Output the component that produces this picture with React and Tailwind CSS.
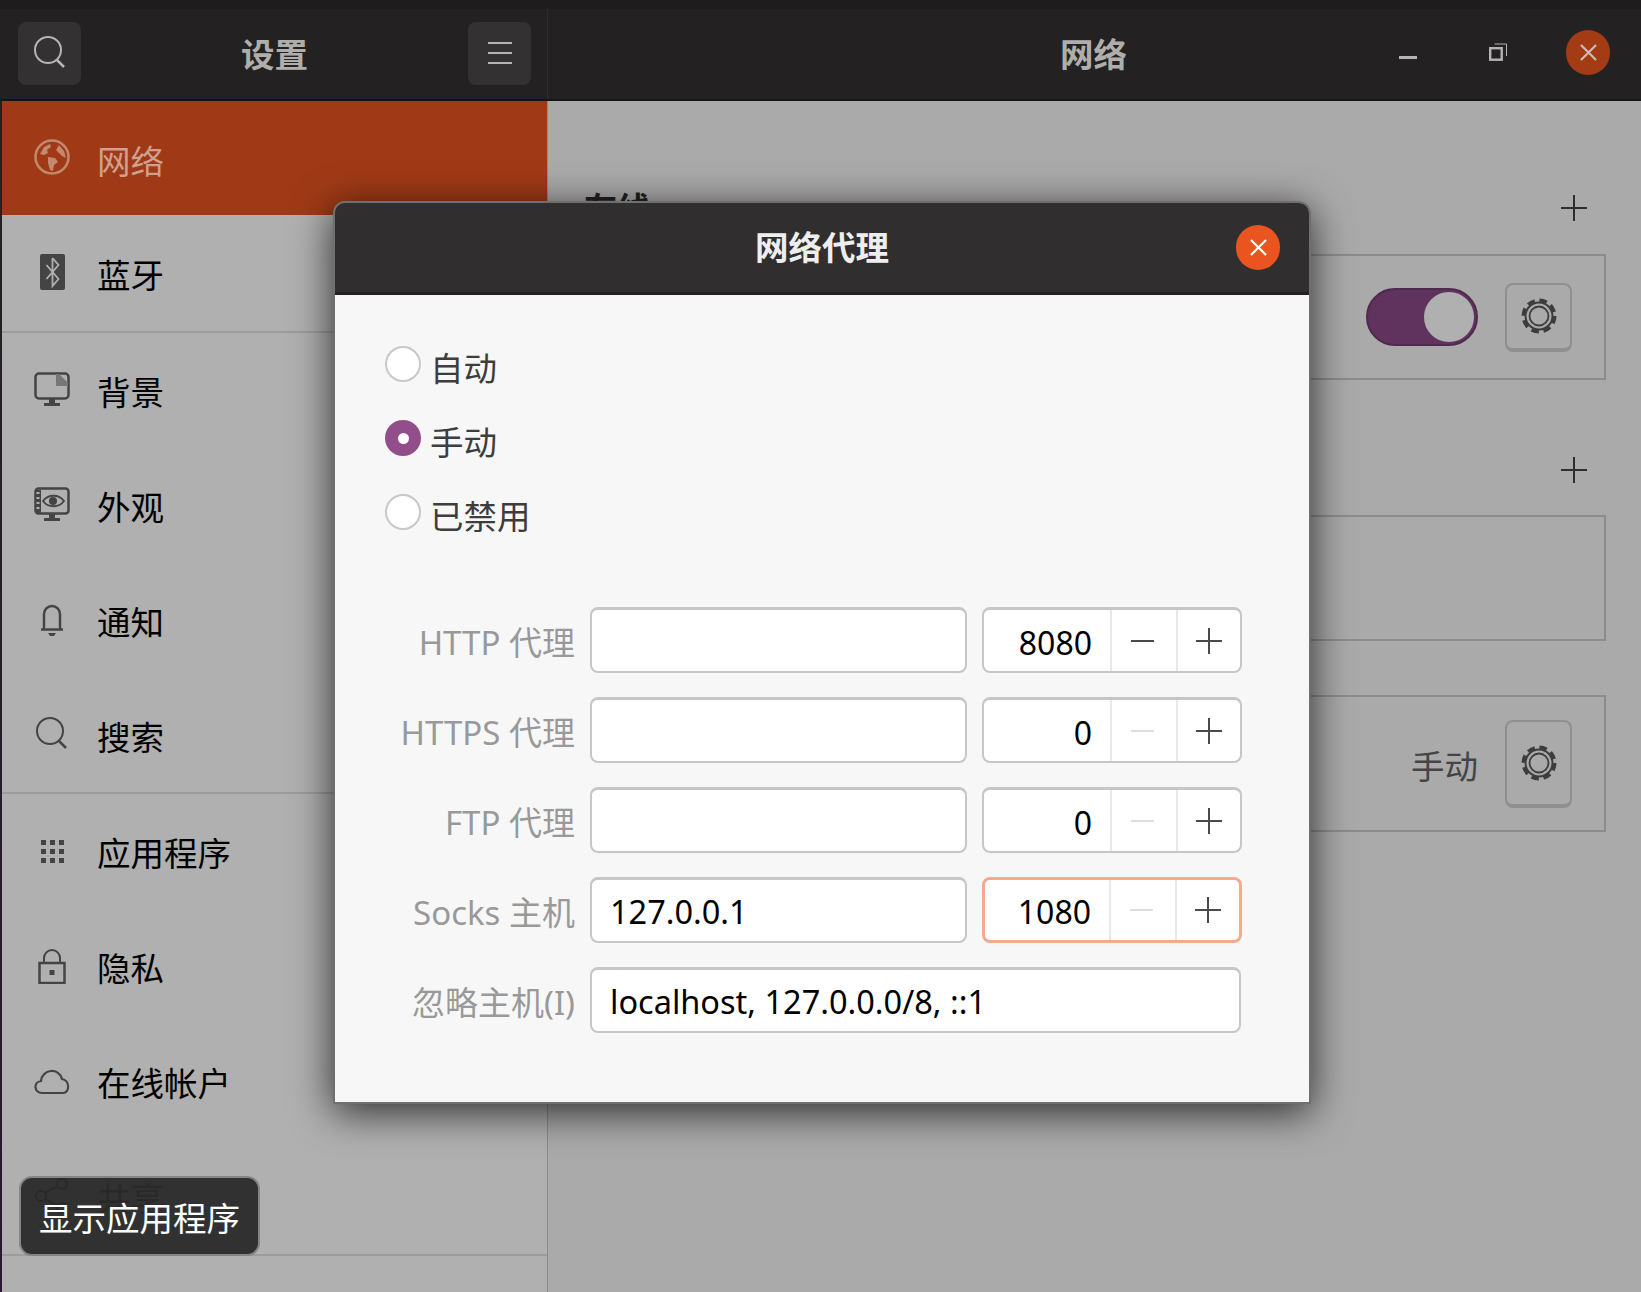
import React from 'react'

const ink = '#444444'

function SearchGlyph({ color = ink }) {
  return (
    <svg viewBox="0 0 36 36" className="w-[36px] h-[36px]" fill="none" stroke={color} strokeWidth="2">
      <circle cx="16" cy="15" r="13" />
      <path d="M25 25l7 7" strokeWidth="2.5" />
    </svg>
  )
}

function GlobeIcon() {
  return (
    <svg viewBox="0 0 36 36" className="w-[36px] h-[36px]" fill="none">
      <circle cx="18" cy="18" r="16.5" stroke="#c4886f" strokeWidth="2.5" />
      <path d="M6 15l4-7 6-3 1 3-4 3 1 3-4 2zM14 18l7 1 3 4-4 3-1 6-3-1-2-7zM25 6l5 6 2 7-4-2-3-3-3-3z" fill="#c4886f" />
    </svg>
  )
}

function BluetoothIcon() {
  return (
    <svg viewBox="0 0 36 36" className="w-[36px] h-[36px]" fill="none">
      <rect x="6" y="0" width="25" height="36" rx="2" fill={ink} />
      <path d="M18.5 4v28l6-7-12-14M18.5 4l6 7-12 14" stroke="#b0b0b0" strokeWidth="1.8" />
    </svg>
  )
}

function MonitorIcon() {
  return (
    <svg viewBox="0 0 36 36" className="w-[36px] h-[36px]" fill="none">
      <rect x="1.500" y="1.500" width="33" height="25" rx="3.500" stroke={ink} strokeWidth="2.500" />
      <path d="M22 2h3l9 9v3H22z" fill="#777777" />
      <path d="M15 27h6v4h5v3H10v-3h5z" fill={ink} />
    </svg>
  )
}

function AppearanceIcon() {
  return (
    <svg viewBox="0 0 36 36" className="w-[36px] h-[36px]" fill="none">
      <rect x="1.500" y="1.500" width="33" height="25" rx="3" stroke={ink} strokeWidth="2.500" />
      <path d="M1 3h6v23H1z" fill={ink} />
      <path d="M2.500 6h3M2.500 11h3M2.500 16h3M2.500 21h3" stroke="#b0b0b0" strokeWidth="2" />
      <path d="M9 14c5-7 16-7 21 0-5 7-16 7-21 0z" stroke={ink} strokeWidth="1.800" />
      <circle cx="19" cy="14" r="4" fill={ink} />
      <path d="M15 27h6v4h5v3H10v-3h5z" fill={ink} />
    </svg>
  )
}

function BellIcon() {
  return (
    <svg viewBox="0 0 36 36" className="w-[36px] h-[36px]" fill="none">
      <path d="M10 27V12a8 8 0 0 1 16 0v15M7 27.500h22" stroke={ink} strokeWidth="2.500" />
      <path d="M14 31h8l-2 3h-4z" fill={ink} />
    </svg>
  )
}

function GridIcon() {
  const dots = [7, 16, 25]
  return (
    <svg viewBox="0 0 36 36" className="w-[36px] h-[36px]" fill={ink}>
      {dots.map((y) => dots.map((x) => <rect key={`${x}-${y}`} x={x} y={y} width="5" height="5" />))}
    </svg>
  )
}

function LockIcon() {
  return (
    <svg viewBox="0 0 36 36" className="w-[36px] h-[36px]" fill="none">
      <path d="M10 15V10a8 8 0 0 1 16 0v5" stroke={ink} strokeWidth="2" />
      <rect x="5.500" y="15" width="25" height="20" stroke={ink} strokeWidth="2.500" />
      <rect x="15.500" y="22" width="5" height="5" fill={ink} />
    </svg>
  )
}

function CloudIcon() {
  return (
    <svg viewBox="0 0 36 36" className="w-[36px] h-[36px]" fill="none">
      <path d="M8 30c-8 0-9-11-1-12 1-12 18-14 21-2 8 1 8 14 1 14z" stroke={ink} strokeWidth="2.200" />
    </svg>
  )
}

function ShareIcon() {
  return (
    <svg viewBox="0 0 36 36" className="w-[36px] h-[36px]" fill="none" stroke="#111111" strokeWidth="2">
      <circle cx="7" cy="18" r="5" />
      <circle cx="28" cy="6" r="5" />
      <circle cx="28" cy="30" r="5" />
      <path d="M11 15l13-7M11 21l13 7" />
    </svg>
  )
}

function GearIcon() {
  return (
    <svg viewBox="0 0 36 36" className="w-[36px] h-[36px]" fill="none" stroke="#3d3d3d">
      <circle cx="18" cy="18" r="15.500" strokeWidth="4" strokeDasharray="7.500 4.670" />
      <circle cx="18" cy="18" r="13.500" strokeWidth="2" />
      <circle cx="18" cy="18" r="9.500" strokeWidth="1.800" />
    </svg>
  )
}

function CloseCircle({ bg, color }) {
  return (
    <div className={`w-[44px] h-[45px] rounded-full flex items-center justify-center ${bg}`}>
      <svg viewBox="0 0 18 18" className="w-[17px] h-[17px]" fill="none" stroke={color} strokeWidth="2.200">
        <path d="M1 1l16 16M17 1L1 17" />
      </svg>
    </div>
  )
}

const navGroups = [
  [
    { label: '网络', icon: <GlobeIcon />, active: true, h: 'h-[114px]' },
    { label: '蓝牙', icon: <BluetoothIcon />, h: 'h-[116px]' },
  ],
  [
    { label: '背景', icon: <MonitorIcon />, h: 'h-[115px]' },
    { label: '外观', icon: <AppearanceIcon />, h: 'h-[115px]' },
    { label: '通知', icon: <BellIcon />, h: 'h-[115px]' },
    { label: '搜索', icon: <SearchGlyph />, h: 'h-[114px]' },
  ],
  [
    { label: '应用程序', icon: <GridIcon />, h: 'h-[115px]' },
    { label: '隐私', icon: <LockIcon />, h: 'h-[115px]' },
    { label: '在线帐户', icon: <CloudIcon />, h: 'h-[115px]' },
    { label: '共享', icon: <ShareIcon />, h: 'h-[115px]' },
  ],
]

function NavRow({ item }) {
  return (
    <div className={`${item.h} flex items-center pl-[32px] ${item.active ? 'bg-[#a03a16] text-[#cfa08e]' : 'text-black'}`}>
      <div className="w-[36px] h-[36px] -mt-[2px]">{item.icon}</div>
      <span className={`ml-[27px] text-[33.5px] leading-none ${item.active ? 'mt-[7px]' : 'mt-[5px]'}`}>{item.label}</span>
    </div>
  )
}

function Sidebar() {
  return (
    <div className="w-[546px] shrink-0 bg-[#b0b0b0] border-r border-[#8c8c8c]">
      {navGroups.map((group, i) => (
        <div key={i} className="border-b-2 border-[#9c9c9c]">
          {group.map((item) => <NavRow key={item.label} item={item} />)}
        </div>
      ))}
    </div>
  )
}

function SectionHead({ title, className }) {
  return (
    <div className={`h-[48px] flex items-center justify-between pr-[19px] text-[33px] leading-none text-[#222222] ${className}`}>
      <span className="font-bold">{title}</span>
      <svg viewBox="0 0 26 26" className="w-[26px] h-[26px]" fill="none" stroke="#2e2e2e" strokeWidth="2">
        <path d="M13 0v26M0 13h26" />
      </svg>
    </div>
  )
}

function GearButton({ className }) {
  return (
    <div className={`w-[67px] flex items-center justify-center rounded-[8px] border-2 border-[#8f8f8f] border-b-[4px] ${className}`}>
      <GearIcon />
    </div>
  )
}

function MainPanel() {
  return (
    <div className="flex-1 bg-[#aaaaaa] pl-[36px] pr-[35px] pt-[83px]">
      <SectionHead title="有线" className="mb-[22px]" />
      <div className="h-[126px] border-2 border-[#8c8c8c] flex items-center justify-end pr-[32px] gap-[27px]">
        <div className="w-[112px] h-[58px] rounded-full bg-[#60335e] border-2 border-[#4f2a4e] flex justify-end">
          <div className="w-[54px] h-full rounded-full bg-[#b0b0b0] border-2 border-[#60335e]" />
        </div>
        <GearButton className="h-[69px]" />
      </div>
      <SectionHead title="" className="mt-[66px] mb-[21px]" />
      <div className="h-[126px] border-2 border-[#8c8c8c]" />
      <div className="mt-[54px] h-[137px] border-2 border-[#8c8c8c] flex items-center justify-end pr-[32px] gap-[27px]">
        <span className="pt-[6px] text-[33.5px] leading-none text-[#444444]">手动</span>
        <GearButton className="h-[88px]" />
      </div>
    </div>
  )
}

function Radio({ label, checked }) {
  return (
    <div className="h-[36px] flex items-center">
      {checked ? (
        <div className="w-[36px] h-[36px] rounded-full bg-[#924d8b] flex items-center justify-center">
          <div className="w-[11px] h-[11px] rounded-full bg-white" />
        </div>
      ) : (
        <div className="w-[36px] h-[36px] rounded-full bg-white border-2 border-[#c8c8c8]" />
      )}
      <span className="ml-[9px] pt-[10px] text-[33.5px] leading-none text-[#3d3d3d]">{label}</span>
    </div>
  )
}

function Spin({ value, canDecrease, focused }) {
  return (
    <div className={`w-[260px] h-full shrink-0 rounded-[8px] bg-white flex ${focused ? 'border-[3px] border-[#f5aa90]' : 'border-2 border-t-[3px] border-[#c6c6c6]'}`}>
      <div className="flex-1 flex items-center justify-end pr-[18px] pt-[4px] text-[32px] leading-none text-black">{value}</div>
      <div className="w-[66px] flex items-center justify-center pr-[3px] border-l-2 border-[#e8e8e8]">
        <div className={`w-[23px] h-[2px] ${canDecrease ? 'bg-[#4a4a4a]' : 'bg-[#dddddd]'}`} />
      </div>
      <div className="w-[64px] flex items-center justify-center border-l-2 border-[#e8e8e8]">
        <svg viewBox="0 0 26 26" className="w-[26px] h-[26px]" fill="none" stroke="#4a4a4a" strokeWidth="2">
          <path d="M13 0v26M0 13h26" />
        </svg>
      </div>
    </div>
  )
}

function Field({ label, children }) {
  return (
    <div className="h-[66px] flex gap-[15px]">
      <div className="w-[205px] shrink-0 flex items-center justify-end pt-[4px] whitespace-nowrap text-[33px] leading-none text-[#999999]">{label}</div>
      {children}
    </div>
  )
}

function TextBox({ value, className }) {
  return (
    <div className={`h-full rounded-[8px] bg-white border-2 border-t-[3px] border-[#c6c6c6] flex items-center pl-[18px] pt-[4px] text-[32.5px] leading-none text-black whitespace-nowrap ${className}`}>
      {value}
    </div>
  )
}

function ProxyDialog() {
  return (
    <div className="absolute left-[333px] top-[201px] w-[978px] h-[903px] flex flex-col rounded-t-[12px] border-2 border-[#6f6f6f] shadow-[0_8px_40px_rgba(0,0,0,0.75)] overflow-hidden">
      <div className="h-[92px] shrink-0 bg-[#302e2f] border-b-[3px] border-[#232122] grid grid-cols-[1fr_auto_1fr] items-center">
        <div />
        <span className="text-[33.5px] leading-none font-bold text-[#eeeeee]">网络代理</span>
        <div className="flex justify-end pr-[29px]">
          <CloseCircle bg="bg-[#e9541f]" color="#ffffff" />
        </div>
      </div>
      <div className="flex-1 bg-[#f7f7f7] pt-[51px] pl-[35px] pr-[68px]">
        <div className="pl-[15px] flex flex-col gap-[38px]">
          <Radio label="自动" />
          <Radio label="手动" checked />
          <Radio label="已禁用" />
        </div>
        <div className="mt-[77px] flex flex-col gap-[24px]">
          <Field label="HTTP 代理">
            <TextBox value="" className="w-[377px] shrink-0" />
            <Spin value="8080" canDecrease />
          </Field>
          <Field label="HTTPS 代理">
            <TextBox value="" className="w-[377px] shrink-0" />
            <Spin value="0" />
          </Field>
          <Field label="FTP 代理">
            <TextBox value="" className="w-[377px] shrink-0" />
            <Spin value="0" />
          </Field>
          <Field label="Socks 主机">
            <TextBox value="127.0.0.1" className="w-[377px] shrink-0" />
            <Spin value="1080" focused />
          </Field>
          <Field label="忽略主机(I)">
            <TextBox value="localhost, 127.0.0.0/8, ::1" className="flex-1" />
          </Field>
        </div>
      </div>
    </div>
  )
}

export default function App() {
  return (
    <div className="relative w-[1641px] h-[1292px] overflow-hidden flex flex-col bg-[#aaaaaa] font-['Noto_Sans','Noto_Sans_CJK_SC',sans-serif]">
      <div className="h-[9px] shrink-0 bg-[#1d1d1d]" />
      <div className="h-[92px] shrink-0 bg-[#232122] border-b-2 border-[#151515] flex pl-[2px]">
        <div className="w-[546px] shrink-0 border-r border-[#2e2c2d] grid grid-cols-[1fr_auto_1fr] items-center px-[16px]">
          <div className="w-[63px] h-[63px] rounded-[8px] bg-[#333132] flex items-center justify-center -mt-[2px]">
            <SearchGlyph color="#b5b5b5" />
          </div>
          <span className="pt-[2px] text-[33.5px] leading-none font-bold text-[#b0aeaa]">设置</span>
          <div className="justify-self-end w-[63px] h-[63px] rounded-[8px] bg-[#333132] flex flex-col items-center justify-center gap-[8px] -mt-[2px]">
            <div className="w-[24px] h-[2px] bg-[#b5b5b5]" />
            <div className="w-[24px] h-[2px] bg-[#b5b5b5]" />
            <div className="w-[24px] h-[2px] bg-[#b5b5b5]" />
          </div>
        </div>
        <div className="flex-1 grid grid-cols-[1fr_auto_1fr] items-center">
          <div />
          <span className="pt-[2px] pr-[2px] text-[33.5px] leading-none font-bold text-[#b0aeaa]">网络</span>
          <div className="flex justify-end items-center gap-[46px] pr-[31px] -mt-[4px]">
            <div className="w-[44px] flex justify-center pt-[10px]">
              <div className="w-[18px] h-[3px] bg-[#b5b5b5]" />
            </div>
            <div className="w-[44px] flex justify-center">
              <svg viewBox="0 0 18 18" className="w-[18px] h-[18px]" fill="none" stroke="#b5b5b5">
                <rect x="1.200" y="5.200" width="11.500" height="11.500" strokeWidth="2.400" />
                <path d="M5.500 1h12v12" strokeWidth="1" />
              </svg>
            </div>
            <CloseCircle bg="bg-[#a33c15]" color="#c8c0b8" />
          </div>
        </div>
      </div>
      <div className="flex-1 flex min-h-0">
        <div className="w-[2px] shrink-0 bg-gradient-to-b from-[#222222] to-[#2b1830]" />
        <Sidebar />
        <MainPanel />
      </div>

      <ProxyDialog />

      <div className="absolute left-[19px] top-[1176px] w-[241px] h-[80px] rounded-[13px] bg-[#2a2a2a]/95 border-2 border-[#bdbdbd]/60 flex items-center justify-center pt-[5px] text-[33.5px] leading-none text-white">
        显示应用程序
      </div>
    </div>
  )
}
